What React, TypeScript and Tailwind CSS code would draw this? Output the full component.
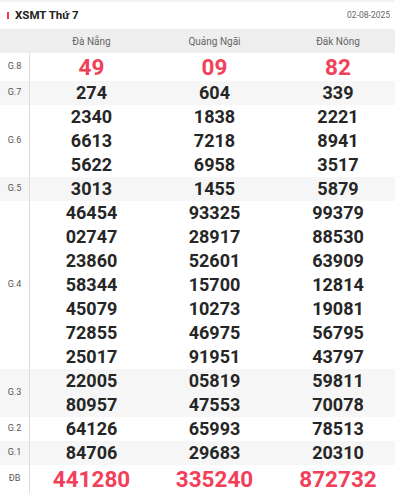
import React from "react";

type Prize = {
  label: string;
  values: string[][];
  big?: boolean;
};

const provinces = ["Đà Nẵng", "Quảng Ngãi", "Đăk Nông"];

const prizes: Prize[] = [
  { label: "G.8", values: [["49"], ["09"], ["82"]], big: true },
  { label: "G.7", values: [["274"], ["604"], ["339"]] },
  {
    label: "G.6",
    values: [
      ["2340", "6613", "5622"],
      ["1838", "7218", "6958"],
      ["2221", "8941", "3517"],
    ],
  },
  { label: "G.5", values: [["3013"], ["1455"], ["5879"]] },
  {
    label: "G.4",
    values: [
      ["46454", "02747", "23860", "58344", "45079", "72855", "25017"],
      ["93325", "28917", "52601", "15700", "10273", "46975", "91951"],
      ["99379", "88530", "63909", "12814", "19081", "56795", "43797"],
    ],
  },
  {
    label: "G.3",
    values: [
      ["22005", "80957"],
      ["05819", "47553"],
      ["59811", "70078"],
    ],
  },
  { label: "G.2", values: [["64126"], ["65993"], ["78513"]] },
  { label: "G.1", values: [["84706"], ["29683"], ["20310"]] },
  { label: "ĐB", values: [["441280"], ["335240"], ["872732"]], big: true },
];

export default function App() {
  return (
    <main className="w-[395px] overflow-hidden bg-white font-['Roboto',sans-serif] text-[#222]">
      <div className="h-[2px] bg-[#f2f2f2]" />

      <div className="flex h-[27px] items-center justify-between pl-[7px] pr-[5px]">
        <h1 className="flex items-center gap-[6px] text-[11.5px] font-bold leading-none">
          <span className="h-[7px] w-[2px] bg-[#ef3a4f]" />
          XSMT Thứ 7
        </h1>
        <span className="text-[8.5px] text-[#666]">02-08-2025</span>
      </div>

      <div className="grid h-[24px] w-[400px] grid-cols-[30px_123px_123px_124px] items-center bg-[#eeeeee] text-[10px] text-[#666]">
        <span />
        {provinces.map((p) => (
          <span key={p} className="text-center">
            {p}
          </span>
        ))}
      </div>

      {prizes.map((prize, i) => (
        <div
          key={prize.label}
          className={`grid w-[400px] grid-cols-[30px_123px_123px_124px] ${
            i % 2 === 1 ? "bg-[#f6f6f6]" : "bg-white"
          }`}
        >
          <div className="flex items-center justify-center border-r border-[#dcdcdc] text-[9px] text-[#555]">
            {prize.label}
          </div>
          {prize.values.map((col, c) => (
            <div key={c} className="flex flex-col items-center">
              {col.map((v) =>
                prize.big ? (
                  <span
                    key={v}
                    className="text-[22.5px] font-bold leading-[28px] text-[#f2405a]"
                  >
                    {v}
                  </span>
                ) : (
                  <span
                    key={v}
                    className="text-[18px] font-bold leading-[24px] text-[#262626]"
                  >
                    {v}
                  </span>
                )
              )}
            </div>
          ))}
        </div>
      ))}
    </main>
  );
}
